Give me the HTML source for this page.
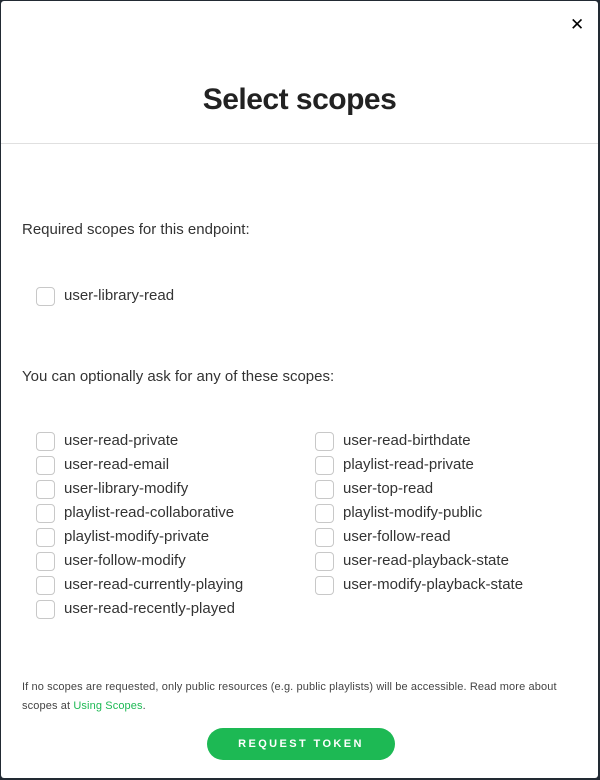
<!DOCTYPE html>
<html><head><style>
body{margin:0;width:600px;height:780px;background:#222a33;font-family:"Liberation Sans",sans-serif;overflow:hidden;position:relative}
.m{position:absolute;left:1px;top:1px;width:597px;height:777px;background:#fff;border-radius:3px}
.x{position:absolute;left:569px;top:14px;font-size:17px;color:#000}
h1{position:absolute;top:82px;left:0;width:100%;text-align:center;margin:0;font-size:30px;font-weight:bold;color:#222;letter-spacing:-0.5px}
.hr{position:absolute;top:142px;left:0;width:100%;height:1px;background:#e0e0e0}
.t{position:absolute;left:21px;font-size:15px;color:#333}
.r{position:absolute;font-size:15px;color:#333;height:24px;line-height:24px;white-space:nowrap}
.r i{position:absolute;left:-28px;top:3px;border:1px solid #c8c8c8;border-radius:4px;box-sizing:border-box;width:19px;height:19px}
.f{position:absolute;left:21px;top:677px;font-size:11px;color:#444;line-height:19px;width:560px;letter-spacing:0.12px}
.f a{color:#1db954;text-decoration:none}
.b{position:absolute;left:206px;top:727px;width:188px;height:32px;border-radius:16px;background:#1db954;color:#fff;font-size:11px;font-weight:bold;letter-spacing:2.4px;text-align:center;line-height:32px}
</style></head><body><div class="m">
<div class="x">✕</div>
<h1>Select scopes</h1>
<div class="hr"></div>
<div class="t" style="top:220px">Required scopes for this endpoint:</div>
<div class="r" style="left:63px;top:283px"><i></i>user-library-read</div>
<div class="t" style="top:367px">You can optionally ask for any of these scopes:</div>
<div class="r" style="left:63px;top:428px"><i></i>user-read-private</div>
<div class="r" style="left:63px;top:452px"><i></i>user-read-email</div>
<div class="r" style="left:63px;top:476px"><i></i>user-library-modify</div>
<div class="r" style="left:63px;top:500px"><i></i>playlist-read-collaborative</div>
<div class="r" style="left:63px;top:524px"><i></i>playlist-modify-private</div>
<div class="r" style="left:63px;top:548px"><i></i>user-follow-modify</div>
<div class="r" style="left:63px;top:572px"><i></i>user-read-currently-playing</div>
<div class="r" style="left:63px;top:596px"><i></i>user-read-recently-played</div>
<div class="r" style="left:342px;top:428px"><i></i>user-read-birthdate</div>
<div class="r" style="left:342px;top:452px"><i></i>playlist-read-private</div>
<div class="r" style="left:342px;top:476px"><i></i>user-top-read</div>
<div class="r" style="left:342px;top:500px"><i></i>playlist-modify-public</div>
<div class="r" style="left:342px;top:524px"><i></i>user-follow-read</div>
<div class="r" style="left:342px;top:548px"><i></i>user-read-playback-state</div>
<div class="r" style="left:342px;top:572px"><i></i>user-modify-playback-state</div>
<div class="f">If no scopes are requested, only public resources (e.g. public playlists) will be accessible. Read more about scopes at <a>Using Scopes</a>.</div>
<div class="b">REQUEST TOKEN</div>
</div></body></html>
